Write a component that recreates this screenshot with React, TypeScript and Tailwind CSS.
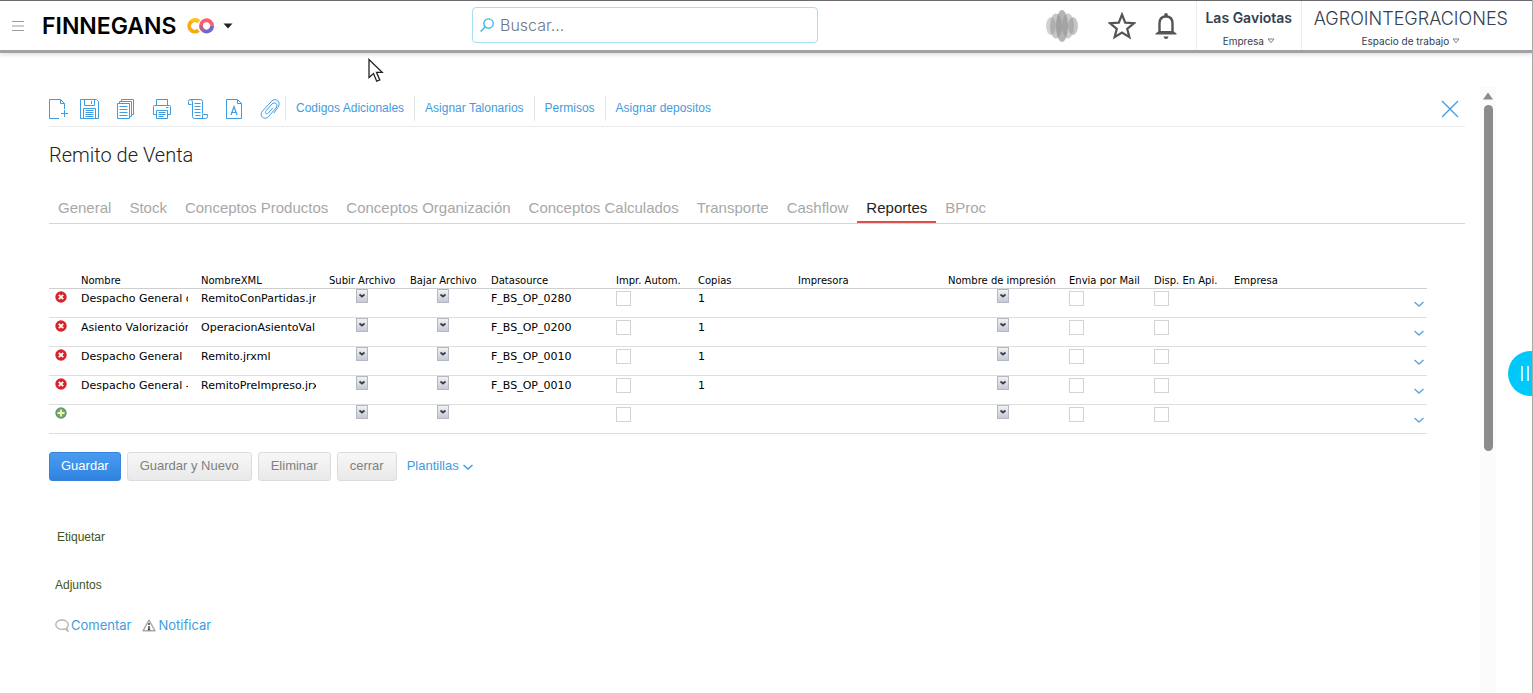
import React from 'react';

type IconProps = { className?: string };

const Svg: React.FC<{ children: React.ReactNode }> = ({ children }) => (
    <svg width="20" height="20" viewBox="1 1 20 20" fill="none" stroke="currentColor" aria-hidden="true">
        {children}
    </svg>
);

const NewIcon = () => (
    <Svg>
        <path d="M11 20.500H1.500V1.500H12.500L16.500 5.500V11M12.500 1.500V5.500H16.500" />
        <path d="M13 15.500H20M16.500 12V19" />
    </Svg>
);

const SaveIcon = () => (
    <Svg>
        <path d="M1.500 1.500H17.500L19.500 3.500V20.500H1.500Z" />
        <path d="M5.500 1.500V7.500H15.500V1.500M12.500 3V6" />
        <path d="M4.500 20.500V10.500H16.500V20.500" />
        <path d="M6.500 12.500H14.500M6.500 14.500H14.500M6.500 16.500H14.500M6.500 18.500H14.500" />
    </Svg>
);

const CopyIcon = () => (
    <Svg>
        <path d="M2.500 5.500H14.500V20.500H2.500Z" />
        <path d="M4.500 5.500V3.500H16.500V18.500H14.500" />
        <path d="M6.500 3.500V1.500H18.500V16.500H16.500" />
        <path d="M4.500 8.500H12.500M4.500 11.500H12.500M4.500 14.500H12.500M4.500 17.500H12.500" />
    </Svg>
);

const PrintIcon = () => (
    <Svg>
        <path d="M5.500 7.500V1.500H16.500V7.500" />
        <path d="M5.500 16.500H2.500V8.500Q2.500 7.500 3.500 7.500H18.500Q19.500 7.500 19.500 8.500V16.500H16.500" />
        <path d="M5.500 12.500H16.500V20.500H5.500Z" />
        <path d="M15 9.500H17.500M7.500 14.500H14.500M7.500 16.500H14.500M7.500 18.500H12.500" />
    </Svg>
);

const ScrollIcon = () => (
    <Svg>
        <path d="M4.500 6.500H1.500V3.500Q1.500 1.500 3.500 1.500H13.500Q15.500 1.500 15.500 3.500V15.500" />
        <path d="M3 1.500Q5.500 1.500 5.500 4V18.500Q5.500 20.500 7.500 20.500H18.500" />
        <path d="M15.500 20.500V16.500H20.500V18.500Q20.500 20.500 18.500 20.500" />
        <path d="M7.500 5.500H13.500M7.500 8.500H13.500M7.500 11.500H13.500M7.500 14.500H13.500M8.500 17.500H13.500" />
    </Svg>
);

const LetterIcon = () => (
    <Svg>
        <path d="M3.500 1.500H14.500L18.500 5.500V20.500H3.500ZM14.500 1.500V5.500H18.500" />
        <path d="M8 17L11 8.500L14 17M9 14.500H13" strokeWidth="1.200" />
    </Svg>
);

const ClipIcon = () => (
    <Svg>
        <path d="M14.800 15.200L19 9.300C20.500 7 20.600 4.500 18.800 2.800C17 1.200 14.500 1.200 12.800 3L3.600 13C1.800 15 1.700 17.500 3.300 19.100C4.900 20.800 7.500 20.700 9.300 18.800L16.800 10.200C18.100 8.600 18.300 6.900 17.200 5.700C16 4.500 14.200 4.700 12.900 6.100L7.200 12.700C6.300 13.800 6.200 14.700 6.900 15.400C7.600 16 8.600 15.900 9.400 15L13.800 10" />
    </Svg>
);

const ChevronDown: React.FC<IconProps> = ({ className }) => (
    <svg width="12" height="8" viewBox="0 0 12 8" fill="none" stroke="currentColor" strokeWidth="1.400" className={className} aria-hidden="true">
        <path d="M1.500 2L6 6L10.500 2" />
    </svg>
);

const SmallTriangle = () => (
    <svg width="8" height="6" viewBox="0 0 8 6" fill="none" stroke="#7d8590" aria-hidden="true">
        <path d="M1 1H7L4 4.800Z" />
    </svg>
);

const LogoRings = () => (
    <svg width="28" height="16" viewBox="0 0 28 16" fill="none" strokeWidth="3.800" aria-hidden="true">
        <path d="M11.500 12.200A5.600 5.600 0 1 1 11.500 3.800" stroke="#fba910" />
        <path d="M12 3.400A5.600 5.600 0 0 0 4 3.800" stroke="#fcc419" />
        <path d="M14 8A5.500 5.500 0 0 1 25 7.500" stroke="#fb5f6c" />
        <path d="M25 7.500A5.500 5.500 0 0 1 16 12.200" stroke="#7367c9" />
        <path d="M16.500 12.500A5.500 5.500 0 0 1 14 7.800" stroke="#b9608f" />
    </svg>
);

const AvatarShape = () => (
    <svg width="34" height="34" viewBox="0 0 34 34" aria-hidden="true">
        <g fill="#8d8d8d">
            <ellipse cx="6" cy="17" rx="5" ry="9" opacity="0.400" />
            <ellipse cx="28" cy="17" rx="5" ry="9" opacity="0.500" />
            <ellipse cx="11" cy="17" rx="6" ry="12.500" opacity="0.500" />
            <ellipse cx="23" cy="17" rx="6" ry="12.500" opacity="0.450" />
            <ellipse cx="17" cy="17" rx="6" ry="16" opacity="0.650" />
        </g>
    </svg>
);

const DeleteIcon = () => (
    <svg width="12" height="12" viewBox="0 0 12 12" aria-hidden="true">
        <circle cx="6" cy="6" r="5.700" fill="#d8232a" />
        <path d="M3.800 3.800L8.200 8.200M8.200 3.800L3.800 8.200" stroke="#fff" strokeWidth="1.800" />
    </svg>
);

const AddIcon = () => (
    <svg width="12" height="12" viewBox="0 0 12 12" aria-hidden="true">
        <circle cx="6" cy="6" r="5.700" fill="#5f9a6b" />
        <circle cx="6" cy="6" r="4.200" fill="#74ab6a" />
        <path d="M6 2.500V9.500M2.500 6H9.500" stroke="#f4f3b0" strokeWidth="1.800" />
    </svg>
);

const actions = [
    { label: 'Nuevo', icon: NewIcon, className: 'mr-[11px]' },
    { label: 'Guardar documento', icon: SaveIcon, className: 'mr-4' },
    { label: 'Copiar', icon: CopyIcon, className: 'mr-4' },
    { label: 'Imprimir', icon: PrintIcon, className: 'mr-4' },
    { label: 'Historial', icon: ScrollIcon, className: 'mr-4' },
    { label: 'Formato', icon: LetterIcon, className: 'mr-4' },
    { label: 'Adjuntar', icon: ClipIcon, className: 'mr-[5px]' },
];

const links = ['Codigos Adicionales', 'Asignar Talonarios', 'Permisos', 'Asignar depositos'];

const tabs = [
    'General',
    'Stock',
    'Conceptos Productos',
    'Conceptos Organización',
    'Conceptos Calculados',
    'Transporte',
    'Cashflow',
    'Reportes',
    'BProc',
];

const columns = [
    { title: '', width: 'w-8' },
    { title: 'Nombre', width: 'w-[120px]' },
    { title: 'NombreXML', width: 'w-32' },
    { title: 'Subir Archivo', width: 'w-[81px]' },
    { title: 'Bajar Archivo', width: 'w-[81px]' },
    { title: 'Datasource', width: 'w-[125px]' },
    { title: 'Impr. Autom.', width: 'w-[82px]' },
    { title: 'Copias', width: 'w-[100px]' },
    { title: 'Impresora', width: 'w-[150px]' },
    { title: 'Nombre de impresión', width: 'w-[121px]' },
    { title: 'Envia por Mail', width: 'w-[85px]' },
    { title: 'Disp. En Api.', width: 'w-20' },
    { title: 'Empresa', width: '' },
    { title: '', width: 'w-[14px]' },
];

const rows = [
    { name: 'Despacho General con', xml: 'RemitoConPartidas.jrxml', source: 'F_BS_OP_0280', copies: '1' },
    { name: 'Asiento Valorización', xml: 'OperacionAsientoVal', source: 'F_BS_OP_0200', copies: '1' },
    { name: 'Despacho General', xml: 'Remito.jrxml', source: 'F_BS_OP_0010', copies: '1' },
    { name: 'Despacho General -', xml: 'RemitoPreImpreso.jrxml', source: 'F_BS_OP_0010', copies: '1' },
    { name: '', xml: '', source: '', copies: '' },
];

const MiniSelect: React.FC<{ label: string }> = ({ label }) => (
    <div className="relative mx-auto h-[14px] w-3">
        <select
            aria-label={label}
            className="block h-full w-full appearance-none border border-[#b4b8c2] bg-linear-to-b from-[#f1f2f5] to-[#c6cad6] text-transparent"
        />
        <svg width="12" height="14" viewBox="0 0 12 14" fill="none" stroke="#3c3f46" strokeWidth="1.800" className="pointer-events-none absolute inset-0" aria-hidden="true">
            <path d="M3.500 5.500L6 7.500L8.500 5.500" />
        </svg>
    </div>
);

const GridCheckbox: React.FC<{ label: string }> = ({ label }) => (
    <input
        type="checkbox"
        aria-label={label}
        className="mt-[2px] block h-[15px] w-[15px] appearance-none border border-[#d3d3d3] bg-white"
    />
);

const Header = () => (
    <header className="flex h-[53px] items-stretch border-t border-b-3 border-t-[#6a6a70] border-b-[#a0a3a6] bg-white font-['Inter',sans-serif] shadow-[0_2px_4px_rgba(0,0,0,0.12)]">
        <div className="flex w-[472px] shrink-0 items-center pl-3">
            <button aria-label="Menú" className="mr-[18px]">
                <svg width="12" height="12" viewBox="0 0 12 12" stroke="#9b9b9b" aria-hidden="true">
                    <path d="M0 1.500H12M0 6H12M0 10.500H12" />
                </svg>
            </button>
            <span className="mr-[11px] text-[23px] leading-6 font-semibold text-black">FINNEGANS</span>
            <LogoRings />
            <button aria-label="Aplicaciones" className="ml-2">
                <svg width="10" height="6" viewBox="0 0 10 6" fill="#222" aria-hidden="true">
                    <path d="M0.500 0.500H9.500L5 5.500Z" />
                </svg>
            </button>
        </div>
        <label className="mt-[6px] flex h-9 w-[346px] items-center rounded-[4px] border border-[#a4def0] pl-[7px]">
            <svg width="14" height="14" viewBox="0 0 14 14" fill="none" stroke="#35b3e8" strokeWidth="1.300" aria-hidden="true">
                <circle cx="8.500" cy="5.500" r="4.700" />
                <path d="M5.200 9L0.600 13.500" />
            </svg>
            <input
                type="text"
                aria-label="Buscar"
                placeholder="Buscar..."
                className="ml-[6px] min-w-0 flex-1 text-[16px] font-light text-[#6f7780] outline-none placeholder:text-[#6f7780]"
            />
        </label>
        <div className="ml-auto flex items-center">
            <button aria-label="Perfil" className="mr-[29px]">
                <AvatarShape />
            </button>
            <button aria-label="Favoritos" className="mr-[19px]">
                <svg width="28" height="28" viewBox="0 0 28 28" fill="none" stroke="#555" strokeWidth="2.200" aria-hidden="true">
                    <path d="M14 2.500L17.200 10.600L26 11.200L19.200 16.800L21.400 25.200L14 20.600L6.600 25.200L8.800 16.800L2 11.200L10.800 10.600Z" />
                </svg>
            </button>
            <button aria-label="Notificaciones" className="mr-[19px]">
                <svg width="22" height="28" viewBox="0 0 22 28" fill="none" aria-hidden="true">
                    <path d="M4.500 21V11.500C4.500 7 7 4.500 11 4.500S17.500 7 17.500 11.500V21" stroke="#555" strokeWidth="2.400" />
                    <path d="M0.500 22.500V21.500L4 19H18L21.500 21.500V22.500Z" fill="#555" />
                    <path d="M9.200 4.500V2.800Q9.200 1 11 1T12.800 2.800V4.500ZM8.500 24.500H13.500Q13 27 11 27T8.500 24.500Z" fill="#555" />
                </svg>
            </button>
            <button className="flex h-full w-[105px] flex-col items-center border-l border-[#ececef] pt-2 text-[#34404f]">
                <span className="text-[14px] leading-[18px] font-semibold">Las Gaviotas</span>
                <span className="mt-[6px] flex items-center gap-[3px] text-[10px] leading-4">
                    Empresa <SmallTriangle />
                </span>
            </button>
            <button className="flex h-full flex-col items-center border-l border-[#ececef] pt-2 pr-6 pl-3 text-[#34404f]">
                <span className="text-[18px] leading-5 font-light">AGROINTEGRACIONES</span>
                <span className="mt-1 flex items-center gap-[3px] text-[10px] leading-4">
                    Espacio de trabajo <SmallTriangle />
                </span>
            </button>
        </div>
    </header>
);

const Toolbar = () => (
    <div className="flex h-10 items-center border-b border-[#ebebeb] pt-1 text-[#3f9ce0]">
        {actions.map(({ label, icon: Icon, className }) => (
            <button key={label} aria-label={label} className={className}>
                <Icon />
            </button>
        ))}
        {links.map(link => (
            <a key={link} href="#" className="border-l border-[#e6e6e6] px-[10px] text-[12px] leading-[25px]">
                {link}
            </a>
        ))}
        <button aria-label="Cerrar documento" className="mr-[5px] ml-auto">
            <svg width="20" height="18" viewBox="0 0 20 18" stroke="currentColor" strokeWidth="1.300" aria-hidden="true">
                <path d="M2 1L18 17M18 1L2 17" />
            </svg>
        </button>
    </div>
);

const ReportsTable = () => (
    <table className="w-full table-fixed border-collapse text-left font-['DejaVu_Sans',sans-serif] text-black">
        <thead>
            <tr className="border-b border-[#cfcfcf]">
                {columns.map((column, index) => (
                    <th key={index} className={`${column.width} p-0 text-[10px] leading-[14px] font-normal whitespace-nowrap`}>
                        {column.title}
                    </th>
                ))}
            </tr>
        </thead>
        <tbody className="text-[11px] leading-5">
            {rows.map((row, index) => (
                <tr key={index} className="h-[29px] border-b border-[#dedede] align-top">
                    <td className="p-0">
                        <button aria-label={row.name ? 'Quitar fila' : 'Agregar fila'} className="mt-[2px] ml-[6px] block">
                            {row.name ? <DeleteIcon /> : <AddIcon />}
                        </button>
                    </td>
                    <td className="p-0">
                        <div className="mr-[13px] overflow-hidden whitespace-nowrap">{row.name}</div>
                    </td>
                    <td className="p-0">
                        <div className="mr-[13px] overflow-hidden whitespace-nowrap">{row.xml}</div>
                    </td>
                    <td className="p-0 pr-4"><MiniSelect label="Subir Archivo" /></td>
                    <td className="p-0 pr-4"><MiniSelect label="Bajar Archivo" /></td>
                    <td className="p-0">{row.source}</td>
                    <td className="p-0"><GridCheckbox label="Impr. Autom." /></td>
                    <td className="p-0">{row.copies}</td>
                    <td className="p-0" />
                    <td className="p-0 pr-3"><MiniSelect label="Nombre de impresión" /></td>
                    <td className="p-0"><GridCheckbox label="Envia por Mail" /></td>
                    <td className="p-0"><GridCheckbox label="Disp. En Api." /></td>
                    <td className="p-0" />
                    <td className="p-0">
                        <button aria-label="Desplegar fila" className="mt-[11px] block text-[#62a4d8]">
                            <ChevronDown />
                        </button>
                    </td>
                </tr>
            ))}
        </tbody>
    </table>
);

const FormButton: React.FC<{ children: React.ReactNode; primary?: boolean }> = ({ children, primary }) => (
    <button
        className={`h-[29px] rounded-[3px] border pb-[2px] text-[13px] ${
            primary
                ? 'border-[#3583dc] bg-linear-to-b from-[#4a9cf0] to-[#2f83e0] px-[11px] text-white'
                : 'border-[#dcdcdc] bg-linear-to-b from-[#f7f7f7] to-[#e9e9e9] px-3 text-[#808080]'
        }`}
    >
        {children}
    </button>
);

const App: React.FC = () => {
    return (
        <div className="relative flex min-h-screen flex-col overflow-hidden border-r border-[#a9a9a9] bg-white font-['Liberation_Sans',sans-serif]">
            <Header />

            <div className="flex flex-1 pt-[34px]">
                <main className="min-w-0 flex-1 pr-[15px] pl-[49px]">
                    <Toolbar />

                    <h1 className="mt-4 font-['Roboto',sans-serif] text-[20px] leading-6 font-light text-[#222]">Remito de Venta</h1>

                    <nav className="mt-[29px] flex h-[28px] border-b border-[#d6d6d6]">
                        {tabs.map(tab => (
                            <button
                                key={tab}
                                className={`h-[27px] border-b-2 px-[9px] text-[15px] whitespace-nowrap ${
                                    tab === 'Reportes' ? 'border-[#d9534a] text-[#222]' : 'border-transparent text-[#a8a8a8]'
                                }`}
                            >
                                {tab}
                            </button>
                        ))}
                    </nav>

                    <div className="mt-[50px] mr-[38px]">
                        <ReportsTable />
                    </div>

                    <div className="mt-[18px] flex items-center gap-[6px]">
                        <FormButton primary>Guardar</FormButton>
                        <FormButton>Guardar y Nuevo</FormButton>
                        <FormButton>Eliminar</FormButton>
                        <FormButton>cerrar</FormButton>
                        <button className="ml-1 flex items-center gap-[3px] pb-[2px] text-[13px] text-[#3f9ce0]">
                            Plantillas <ChevronDown className="mt-[2px]" />
                        </button>
                    </div>

                    <p className="mt-12 pl-2 text-[12px] leading-4 text-[#3f5420]">Etiquetar</p>
                    <p className="mt-8 pl-[6px] text-[12px] leading-4 text-[#3f5420]">Adjuntos</p>

                    <div className="mt-6 flex gap-[11px] pl-[6px] font-['Inter',sans-serif] text-[13px] leading-4 text-[#3f9ce0]">
                        <a href="#" className="flex items-center gap-[2px]">
                            <svg width="14" height="13" viewBox="0 0 14 13" fill="none" stroke="#b5b5b5" strokeWidth="1.400" aria-hidden="true">
                                <path d="M10 9.800C8 10.500 5 10.300 3.200 9.400C1.600 8.500 0.800 7.200 0.800 5.700C0.800 3 3.500 1 7 1S13.200 3 13.200 5.700C13.200 7 12.600 8 11.800 8.700L12.800 12Z" />
                            </svg>
                            Comentar
                        </a>
                        <a href="#" className="flex items-center gap-[2px]">
                            <svg width="14" height="13" viewBox="0 0 14 13" aria-hidden="true">
                                <path d="M7 1.200L13 11.800H1Z" fill="#fff" stroke="#a8a8a8" strokeWidth="1.400" strokeLinejoin="round" />
                                <path d="M7 4V6M7 7V10.500M5.800 10.500H8.200" stroke="#444" strokeWidth="1.500" />
                            </svg>
                            Notificar
                        </a>
                    </div>
                </main>

                <div className="mr-9 flex w-4 flex-col items-center bg-[#fbfbfb]" aria-hidden="true">
                    <svg width="10" height="8" viewBox="0 0 10 8" className="mt-[5px]" fill="#8b8b8b">
                        <path d="M5 0.500L10 7.500H0Z" />
                    </svg>
                    <div className="mt-[5px] h-[346px] w-[9px] rounded-full bg-[#8b8b8b]" />
                </div>
            </div>

            {/* Side panel handle */}
            <button aria-label="Abrir panel" className="absolute top-[351px] right-0 flex h-[45px] w-6 items-center justify-center gap-1 rounded-l-full bg-[#00c8fa] pl-[10px]">
                <span className="h-[15px] w-[2px] bg-[#c9f3fe]" />
                <span className="h-[15px] w-[2px] bg-[#c9f3fe]" />
            </button>

            {/* Mouse pointer */}
            <svg width="16" height="25" viewBox="0 0 16 25" className="pointer-events-none absolute top-[58px] left-[368px]" aria-hidden="true">
                <path d="M1 1.500V19.500L5.500 15.500L8.700 23.200L11.800 22L8.500 14.300H14.200Z" fill="#fff" stroke="#222" strokeWidth="1.300" />
            </svg>
        </div>
    );
};

export default App;
